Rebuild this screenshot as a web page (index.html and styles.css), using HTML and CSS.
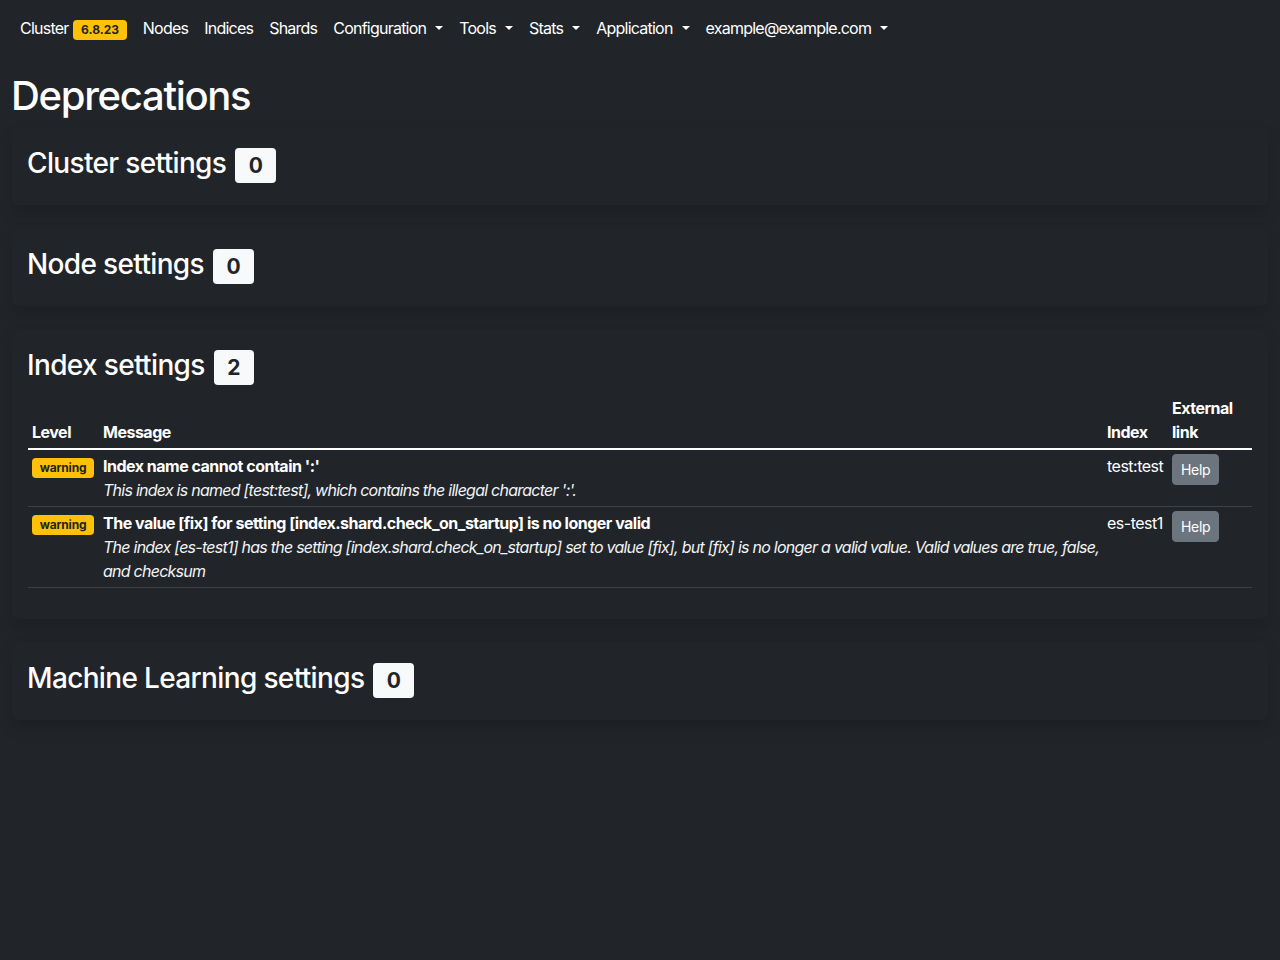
FILE: index.html
```html
<!DOCTYPE html>
<html lang="en">
<head>
<meta charset="utf-8">
<title>Deprecations</title>
<link rel="stylesheet" href="styles.css">
</head>
<body>
<nav class="navbar">
  <ul class="nav">
    <li><a class="nav-link" href="#">Cluster <span class="badge badge-warning">6.8.23</span></a></li>
    <li><a class="nav-link" href="#">Nodes</a></li>
    <li><a class="nav-link" href="#">Indices</a></li>
    <li><a class="nav-link" href="#">Shards</a></li>
    <li><a class="nav-link dropdown-toggle" href="#">Configuration</a></li>
    <li><a class="nav-link dropdown-toggle" href="#">Tools</a></li>
    <li><a class="nav-link dropdown-toggle" href="#">Stats</a></li>
    <li><a class="nav-link dropdown-toggle" href="#">Application</a></li>
    <li><a class="nav-link dropdown-toggle" href="#">example@example.com</a></li>
  </ul>
</nav>
<main class="main">
  <h1 class="page-title">Deprecations</h1>

  <section class="card">
    <h3 class="card-title">Cluster settings <span class="badge badge-light">0</span></h3>
  </section>

  <section class="card">
    <h3 class="card-title">Node settings <span class="badge badge-light">0</span></h3>
  </section>

  <section class="card">
    <h3 class="card-title">Index settings <span class="badge badge-light">2</span></h3>
    <table class="table">
      <thead>
        <tr>
          <th class="col-level">Level</th>
          <th>Message</th>
          <th class="col-index">Index</th>
          <th class="col-link">External link</th>
        </tr>
      </thead>
      <tbody>
        <tr>
          <td><span class="badge badge-warning">warning</span></td>
          <td><strong>Index name cannot contain ':'</strong><br><em>This index is named [test:test], which contains the illegal character ':'.</em></td>
          <td>test:test</td>
          <td><a class="btn" href="#">Help</a></td>
        </tr>
        <tr>
          <td><span class="badge badge-warning">warning</span></td>
          <td><strong>The value [fix] for setting [index.shard.check_on_startup] is no longer valid</strong><br><em>The index [es-test1] has the setting [index.shard.check_on_startup] set to value [fix], but [fix] is no longer a valid value. Valid values are true, false, and checksum</em></td>
          <td>es-test1</td>
          <td><a class="btn" href="#">Help</a></td>
        </tr>
      </tbody>
    </table>
  </section>

  <section class="card">
    <h3 class="card-title">Machine Learning settings <span class="badge badge-light">0</span></h3>
  </section>
</main>
</body>
</html>
```

FILE: styles.css
```css
* { box-sizing: border-box; }
html, body {
  margin: 0;
  background: #212529;
  color: #dee2e6;
  font-family: Inter, "Noto Sans", "Liberation Sans", sans-serif;
  font-size: 16px;
  line-height: 1.5;
}
.navbar {
  height: 56px;
  padding: 8px 12px;
  display: flex;
  align-items: center;
}
.nav {
  list-style: none;
  margin: 0;
  padding: 0;
  display: flex;
  align-items: center;
}
.nav-link {
  display: block;
  padding: 8px;
  color: #fff;
  text-decoration: none;
  letter-spacing: -0.77px;
}
.dropdown-toggle::after {
  content: "";
  display: inline-block;
  margin-left: 9px;
  vertical-align: 0.255em;
  border-top: 0.3em solid;
  border-right: 0.3em solid transparent;
  border-left: 0.3em solid transparent;
  border-bottom: 0;
}
.badge {
  display: inline-block;
  padding: 0.35em 0.65em;
  font-size: 0.75em;
  font-weight: 700;
  line-height: 1;
  text-align: center;
  white-space: nowrap;
  vertical-align: baseline;
  border-radius: 0.25rem;
  letter-spacing: -0.2px;
}
.nav-link .badge { letter-spacing: 0; margin-left: 1px; }
.badge-warning { background: #ffc107; color: #212529; }
.badge-light { background: #f8f9fa; color: #212529; }
.main {
  padding: 16px 12px 0;
}
.page-title {
  margin: 0 0 8px -1px;
  font-size: 40px;
  font-weight: 500;
  line-height: 1.2;
  color: #fff;
  letter-spacing: -1.3px;
}
.card {
  background: #212529;
  box-shadow: 0 0.5rem 1rem rgba(0, 0, 0, 0.15);
  border-radius: 6px;
  padding: 16px;
  margin-bottom: 24px;
}
.card-title {
  margin: 0 0 8px -1px;
  padding-top: 3px;
  height: 37px;
  font-size: 28px;
  font-weight: 500;
  line-height: 1.2;
  color: #fff;
  letter-spacing: -0.65px;
}
.card-title .badge { margin-left: 2px; }
.table {
  width: 100%;
  border-collapse: collapse;
  margin: 1px 0 15px;
  color: #fff;
  letter-spacing: -0.5px;
}
.table th, .table td {
  padding: 4px;
  vertical-align: top;
  text-align: left;
}
.table th { vertical-align: bottom; font-weight: 700; padding-top: 5px; }
.table thead tr { border-bottom: 2px solid #fff; }
.table tbody tr { border-bottom: 1px solid #3d4246; }
.table td em { color: #f1f3f5; letter-spacing: -0.75px; }
.col-level { width: 71px; }
.col-index { width: 65px; }
.col-link { width: 84px; }
.btn {
  display: inline-block;
  padding: 4px 8px;
  font-size: 14px;
  line-height: 1.5;
  background: #6c757d;
  color: #fff;
  border: 1px solid #6c757d;
  border-radius: 4px;
  text-decoration: none;
  letter-spacing: -0.3px;
}
```
